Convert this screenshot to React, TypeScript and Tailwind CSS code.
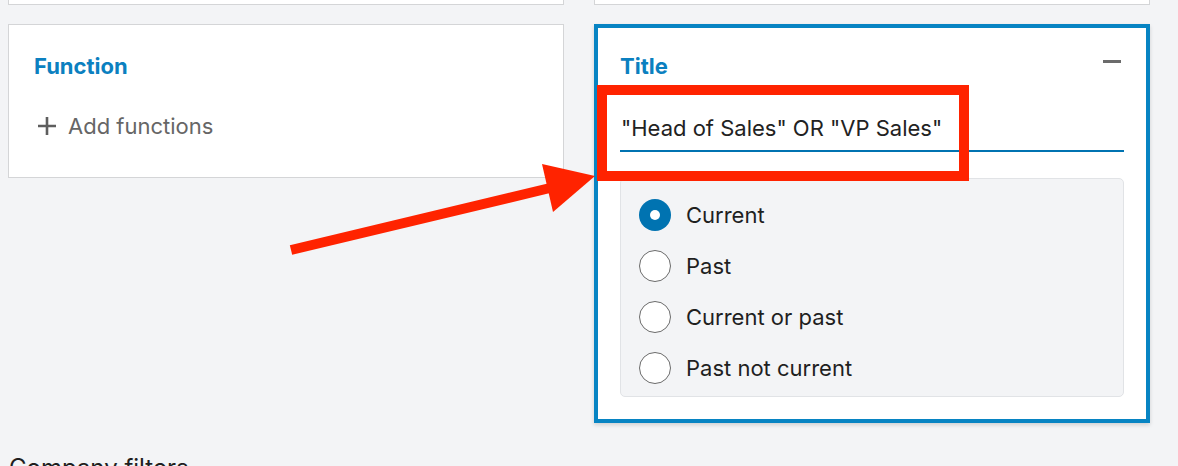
import React from "react";

const options = [
  { label: "Current", checked: true },
  { label: "Past", checked: false },
  { label: "Current or past", checked: false },
  { label: "Past not current", checked: false },
];

export default function App() {
  return (
    <div className="relative w-[1178px] h-[466px] overflow-hidden bg-[#f3f4f6] font-['Inter',sans-serif] text-[#1f1f1f]">
      <div className="flex flex-col pl-2 pr-[28px]">
        {/* cut-off cards above */}
        <div className="flex gap-[30px]">
          <div className="w-[556px] h-[5px] bg-white border-x border-b border-[#d4d5d7]" />
          <div className="w-[556px] h-[5px] bg-white border-x border-b border-[#d4d5d7]" />
        </div>

        <div className="mt-[19px] flex gap-[30px] items-start">
          {/* Function card */}
          <div className="w-[556px] h-[154px] bg-white border border-[#d4d5d7] pl-[25px] pt-[27px]">
            <div className="h-[28px] leading-[28px] text-[22px] font-bold text-[#0b80c0]">Function</div>
            <div className="mt-[32px] h-[28px] flex items-center">
              <svg className="ml-[3px]" width="20" height="20" viewBox="0 0 20 20">
                <path d="M10 1v18M1 10h18" stroke="#5e5e5e" strokeWidth="2.6" fill="none" />
              </svg>
              <span className="ml-[11px] text-[22px] leading-[28px] text-[#666666]">Add functions</span>
            </div>
          </div>

          {/* Title card */}
          <div className="w-[556px] bg-white border-4 border-[#0784c3] px-[22px] pt-[24px] pb-[22px] shadow-[0_2px_4px_rgba(0,0,0,0.15)]">
            <div className="flex justify-between items-start">
              <div className="h-[28px] leading-[28px] text-[22px] font-bold text-[#0b80c0]">Title</div>
              <div className="mt-[8px] mr-[3px] w-[18px] h-[3px] bg-[#6b6b6b]" />
            </div>
            <div className="mt-[34px] pl-[1px] pb-[8px] border-b-2 border-[#0073b1]">
              <div className="h-[28px] leading-[28px] text-[22px] text-[#222222]">
                "Head of Sales" OR "VP Sales"
              </div>
            </div>
            <div className="mt-[26px] bg-[#f3f4f6] border border-[#e1e3e6] rounded-[5px] pl-[18px] pt-[10px] pb-[3px]">
              {options.map((o) => (
                <div key={o.label} className="h-[51px] flex items-center gap-[15px]">
                  {o.checked ? (
                    <div className="w-[32px] h-[32px] rounded-full bg-[#0073b1] flex items-center justify-center">
                      <div className="w-[10px] h-[10px] rounded-full bg-white" />
                    </div>
                  ) : (
                    <div className="w-[32px] h-[32px] rounded-full bg-white border-[1.5px] border-[#6b6b6b]" />
                  )}
                  <span className="text-[22px] leading-[28px] text-[#1f1f1f]">{o.label}</span>
                </div>
              ))}
            </div>
          </div>
        </div>

        <div className="mt-[29px] pl-[1px] h-[32px] leading-[32px] text-[24px] text-[#1f1f1f]">Company filters</div>
      </div>

      {/* Annotation: red box */}
      <div className="absolute left-[597px] top-[85px] w-[372px] h-[96px] border-[10px] border-[#ff2300]" />

      {/* Annotation: arrow */}
      <svg className="absolute left-0 top-0" width="1178" height="466" viewBox="0 0 1178 466">
        <line x1="291" y1="250" x2="550" y2="188" stroke="#ff2300" strokeWidth="10" />
        <polygon points="595,176 542,164 553,212" fill="#ff2300" />
      </svg>
    </div>
  );
}
